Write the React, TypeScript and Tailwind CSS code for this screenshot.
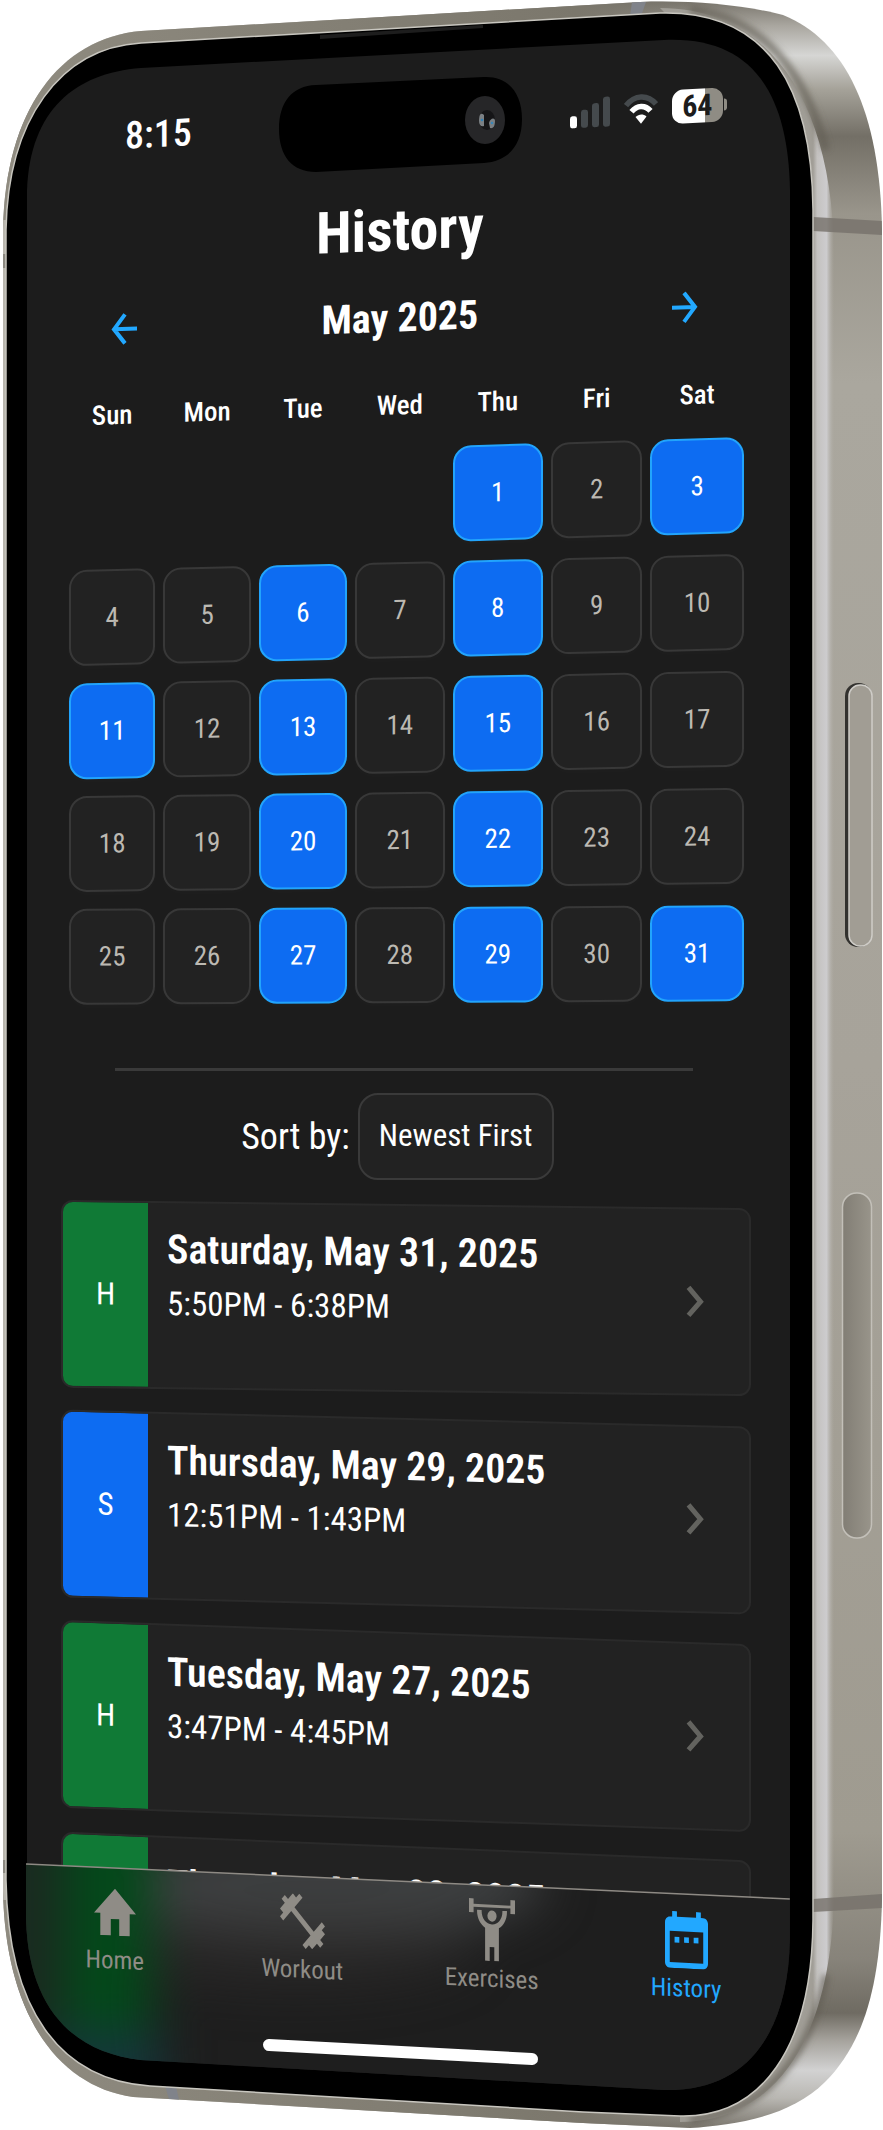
import React from "react";

type Day = { date: number; done?: boolean } | null;

const WEEKDAYS = ["Sun", "Mon", "Tue", "Wed", "Thu", "Fri", "Sat"];
const TRAINED = [1, 3, 6, 8, 11, 13, 15, 20, 22, 27, 29, 31];

const WEEKS: Day[][] = [0, 1, 2, 3, 4].map((week) =>
  WEEKDAYS.map((_, i) => {
    const date = week * 7 + i - 3;
    return date < 1 ? null : { date, done: TRAINED.includes(date) };
  }),
);

const WEEK_TILT = [
  "-skew-y-[1.7deg]",
  "-skew-y-[1.4deg]",
  "-skew-y-[1.1deg]",
  "-skew-y-[0.7deg]",
  "-skew-y-[0.3deg]",
];

const COLUMNS =
  "grid grid-cols-[86fr_87fr_88fr_89fr_90fr_91fr_93fr] gap-2 pl-[43px] pr-[46px]";

const SESSIONS = [
  { tag: "H", color: "bg-[#107a36]", title: "Saturday, May 31, 2025", time: "5:50PM - 6:38PM", tilt: "skew-y-[0.7deg]" },
  { tag: "S", color: "bg-[#0d6cf2]", title: "Thursday, May 29, 2025", time: "12:51PM - 1:43PM", tilt: "skew-y-[1.4deg]" },
  { tag: "H", color: "bg-[#107a36]", title: "Tuesday, May 27, 2025", time: "3:47PM - 4:45PM", tilt: "skew-y-[2deg]" },
  { tag: "H", color: "bg-[#107a36]", title: "Thursday, May 22, 2025", time: "4:02PM - 4:58PM", tilt: "skew-y-[2.4deg]" },
];

function PhoneBody() {
  return (
    <svg
      className="absolute inset-0 h-full w-full"
      viewBox="0 0 883 2130"
      preserveAspectRatio="none"
      aria-hidden="true"
    >
      <defs>
        <linearGradient id="metal" x1="0" y1="0" x2="0" y2="1">
          <stop offset="0" stopColor="#77736a" />
          <stop offset="0.012" stopColor="#a9a69f" />
          <stop offset="0.026" stopColor="#d6d6d4" />
          <stop offset="0.042" stopColor="#a5a299" />
          <stop offset="0.064" stopColor="#736f66" />
          <stop offset="0.1" stopColor="#99958b" />
          <stop offset="0.18" stopColor="#aaa79e" />
          <stop offset="0.5" stopColor="#a7a39a" />
          <stop offset="0.86" stopColor="#9f9b90" />
          <stop offset="0.92" stopColor="#87837a" />
          <stop offset="0.945" stopColor="#6f6b62" />
          <stop offset="0.958" stopColor="#a6a39d" />
          <stop offset="0.972" stopColor="#d2d2d2" />
          <stop offset="0.985" stopColor="#b9b7b2" />
          <stop offset="1" stopColor="#77736a" />
        </linearGradient>
        <linearGradient id="edge" x1="813" x2="834" y1="0" y2="0" gradientUnits="userSpaceOnUse">
          <stop offset="0" stopColor="#a19e97" />
          <stop offset="0.2" stopColor="#c4c2c0" />
          <stop offset="0.65" stopColor="#cdccce" />
          <stop offset="1" stopColor="#b3b0a9" stopOpacity="0" />
        </linearGradient>
        <linearGradient id="rim" x1="0" x2="1" y1="0" y2="0">
          <stop offset="0" stopColor="#8f8b80" />
          <stop offset="0.8" stopColor="#7b776c" />
          <stop offset="1" stopColor="#6f6b62" stopOpacity="0" />
        </linearGradient>
        <linearGradient id="rail" x1="842" x2="872" y1="0" y2="0" gradientUnits="userSpaceOnUse">
          <stop offset="0" stopColor="#817d74" />
          <stop offset="1" stopColor="#99958b" />
        </linearGradient>
        <filter id="shade" x="-20%" y="-20%" width="140%" height="140%">
          <feGaussianBlur stdDeviation="3" />
        </filter>
        <clipPath id="body">
          <path d="M3 230C5 110 60 38 141 31L640 2C690 0 745 5 783 15C845 40 880 110 882 230V1900C880 1990 862 2045 825 2082C790 2117 735 2125 690 2128L583 2123L133 2097C55 2086 5 2010 3 1890Z" />
        </clipPath>
      </defs>
      <g clipPath="url(#body)">
        <rect width="883" height="2130" fill="url(#metal)" />
        <path d="M0 240C5 105 60 34 141 28L647 0H720L690 24L141 50L40 140L10 250Z" fill="url(#rim)" />
        <path d="M0 1880L10 1880C30 2000 60 2070 150 2084L690 2112L730 2130H0Z" fill="url(#rim)" />
        <path d="M0 220H7V1900H0Z" fill="#b9b6ae" />
        <path d="M660 8C775 8 832 110 834 250V1900C830 2040 775 2122 680 2122L680 2108L800 1950V150Z" fill="url(#edge)" />
        <path
          d="M690 10C760 16 805 70 826 150M690 2120C770 2112 812 2050 826 1975"
          fill="none"
          stroke="#5f5b52"
          strokeOpacity="0.7"
          strokeWidth="7"
          filter="url(#shade)"
        />
        <path d="M813 217L883 221V235L813 231Z" fill="#75716a" fillOpacity="0.8" />
        <path d="M813 1899L883 1894V1908L813 1912Z" fill="#75716a" fillOpacity="0.8" />
        <path d="M632 2H646L641 16H630Z" fill="#80838a" />
        <path d="M165 2086H176L179 2100L169 2099Z" fill="#80838a" />
        <path d="M2 254H6V268H2ZM2 1860H6V1873H2Z" fill="#8c8981" />
      </g>
      <rect x="845" y="683" width="27" height="264" rx="13" fill="#33322f" />
      <rect x="849" y="685" width="23" height="261" rx="11" fill="#a19d94" stroke="#cfcdc8" strokeWidth="1.5" />
      <rect x="842.5" y="1193" width="29" height="345" rx="14" fill="url(#rail)" stroke="#c3c0b9" strokeWidth="1.5" />
      <path
        d="M6 230C8 120 60 48 141 43L660 13C770 10 812 90 813 210V1920C812 2050 760 2118 680 2116L583 2112L150 2086C60 2080 8 2010 6 1880Z"
        fill="#000"
        stroke="#c8c6bf"
        strokeWidth="1.5"
      />
      <path d="M320 35L483 25V28L320 39Z" fill="#1d1d1d" />
      <path
        d="M27 190C30 110 75 73 141 68L664 40C750 36 788 90 790 190V1940C788 2030 750 2092 664 2090L141 2060C75 2052 30 2010 27 1920Z"
        fill="#1c1c1c"
      />
      <path d="M316 85L484 77C508 76 522 93 522 119C522 146 508 161 484 163L316 172C292 172 279 156 279 129C279 102 292 86 316 85Z" fill="#000" />
      <ellipse cx="485" cy="120" rx="20" ry="24" fill="#262628" />
      <ellipse cx="487" cy="120" rx="8" ry="10" fill="#151517" />
      <path d="M479 121C479 114 481 112 484 115V126C481 127 479 125 479 121Z" fill="#7b8084" />
      <path d="M489 123C490 118 495 117 495 121C495 126 493 129 490 128Z" fill="#7b8084" />
      <circle cx="482" cy="120" r="1.300" fill="#2f7fb5" />
      <circle cx="492" cy="123" r="1.300" fill="#3a86b8" />
    </svg>
  );
}

function StatusBar() {
  return (
    <div className="flex h-10 -skew-y-3 items-center justify-between pl-[99px] pr-[63px] text-white">
      <span className="text-[38px] font-medium leading-10">8:15</span>
      <div className="flex items-center gap-[14px]">
        <svg width="41" height="34" viewBox="0 0 41 34" aria-label="Signal">
          <rect x="1" y="21" width="7" height="12" rx="2.5" fill="#fff" />
          <rect x="12" y="15" width="7" height="18" rx="2.5" fill="#454a4d" />
          <rect x="23" y="9" width="7" height="24" rx="2.5" fill="#454a4d" />
          <rect x="34" y="3" width="7" height="30" rx="2.5" fill="#454a4d" />
        </svg>
        <svg width="34" height="31" viewBox="0 0 34 31" fill="none" aria-label="Wi-Fi">
          <path d="M2 11C10.500 0.500 23.500 0.500 32 11" stroke="#454a4d" strokeWidth="5.500" />
          <path d="M7.500 17.500C13 11 21 11 26.500 17.500" stroke="#fff" strokeWidth="5.500" />
          <path d="M11.500 23C15 20 19 20 22.500 23L17 30Z" fill="#fff" />
        </svg>
        <span className="flex items-center gap-px">
          <span className="flex h-[34px] w-[51px] items-center justify-center rounded-[11px] bg-[linear-gradient(90deg,#fff_65%,#8f8c84_65%)] text-[30px] font-bold leading-none text-[#1c1c1c]">
            64
          </span>
          <span className="h-3 w-[3px] rounded-r-full bg-[#8f8c84]" />
        </span>
      </div>
    </div>
  );
}

function Arrow({ back = false }: { back?: boolean }) {
  return (
    <svg width="28" height="32" viewBox="0 0 28 32" fill="none" stroke="#22a8ff" strokeWidth="4" aria-hidden="true">
      {back ? <path d="M27 16H4M15 1.500L4 16l11 14.500" /> : <path d="M2 16h23M14 1.500L25 16L14 30.500" />}
    </svg>
  );
}

function Calendar() {
  return (
    <section aria-label="May 2025">
      <div className={`${COLUMNS} mt-[47px] -skew-y-2`}>
        {WEEKDAYS.map((d) => (
          <div key={d} className="text-center text-[27px] font-medium leading-8">
            {d}
          </div>
        ))}
      </div>
      <div className="mt-[26px] flex flex-col gap-[19px]">
        {WEEKS.map((week, w) => (
          <div key={w} className={`${COLUMNS} ${WEEK_TILT[w]}`}>
            {week.map((day, i) =>
              day ? (
                <button
                  key={i}
                  type="button"
                  className={`h-24 rounded-[18px] border-2 text-[27px] shadow-[0_2px_8px_rgba(255,255,255,0.02)] ${
                    day.done
                      ? "border-[#22a4fc] bg-[#0d6cf2] text-white"
                      : "border-[#383838] bg-[#222222] text-[#bcb9b2]"
                  }`}
                >
                  {day.date}
                </button>
              ) : (
                <span key={i} className="h-24" />
              ),
            )}
          </div>
        ))}
      </div>
    </section>
  );
}

function Sessions() {
  return (
    <ul className="mt-6 flex flex-col gap-[26px] pl-[35px] pr-[39px]">
      {SESSIONS.map((s) => (
        <li key={s.title} className={s.tilt}>
          <a
            href="#session"
            className="flex h-[188px] overflow-hidden rounded-xl border-2 border-[#2a2a2a] bg-[#222222]"
          >
            <span className={`flex w-[85px] shrink-0 items-center justify-center text-[31px] ${s.color}`}>
              {s.tag}
            </span>
            <span className="flex flex-1 flex-col pl-[19px] pt-5">
              <span className="text-[40px] font-semibold leading-[54px]">{s.title}</span>
              <span className="text-[33px] leading-[54px]">{s.time}</span>
            </span>
            <span className="flex items-center pr-[45px]">
              <svg width="18" height="32" viewBox="0 0 18 32" fill="none" stroke="#63635f" strokeWidth="5" aria-hidden="true">
                <path d="M2.500 2L14.500 16L2.500 30" />
              </svg>
            </span>
          </a>
        </li>
      ))}
    </ul>
  );
}

const TABS = [
  {
    label: "Home",
    box: "2 3 20 17",
    size: "h-[47px] w-[42px]",
    d: "M10 20v-6h4v6h5v-8h3L12 3 2 12h3v8z",
  },
  {
    label: "Workout",
    box: "2 2 20 20",
    size: "h-[55px] w-[45px]",
    d: "M20.57 14.86L22 13.43 20.57 12 17 15.57 8.43 7 12 3.43 10.57 2 9.14 3.43 7.71 2 5.57 4.14 4.14 2.71 2.71 4.14l1.43 1.43L2 7.71l1.43 1.43L2 10.57 3.43 12 7 8.43 15.57 17 12 20.57 13.43 22l1.43-1.43L16.29 22l2.14-2.14 1.43 1.43 1.43-1.43-1.43-1.43L22 16.290z",
  },
  {
    label: "Exercises",
    box: "2 1 20 22",
    size: "h-[62px] w-[46px]",
    d: "M12 5a2 2 0 1 1 0 4a2 2 0 0 1 0-4M22 1v5h-2V4H4v2H2V1h2v2h16V1zM15 11.260V23h-2v-5h-2v5H9V11.260C6.930 10.170 5.500 8 5.500 5.500V5h2v.500C7.500 8 9.500 10 12 10s4.500-2 4.500-4.500V5h2v.500c0 2.500-1.430 4.670-3.500 5.760z",
  },
  {
    label: "History",
    box: "3 2 18 20",
    size: "h-[57px] w-[43px]",
    active: true,
    d: "M9 11H7v2h2v-2zm4 0h-2v2h2v-2zm4 0h-2v2h2v-2zm2-7h-1V2h-2v2H8V2H6v2H5c-1.110 0-1.990.900-1.990 2L3 20c0 1.100.890 2 2 2h14c1.100 0 2-.900 2-2V6c0-1.100-.900-2-2-2zm0 16H5V9h14v11z",
  },
];

function TabBar() {
  return (
    <nav className="relative -mt-[174px] h-[232px] pt-[35px]">
      <svg
        className="absolute inset-0 h-full w-full"
        viewBox="0 0 763 232"
        preserveAspectRatio="none"
        aria-hidden="true"
      >
        <defs>
          <clipPath id="bar">
            <path d="M0 4L763 39V80C761 170 723 232 637 230L114 200C48 192 3 150 0 60Z" />
          </clipPath>
          <filter
            id="soft"
            filterUnits="userSpaceOnUse"
            x="-200"
            y="-200"
            width="1160"
            height="640"
            colorInterpolationFilters="sRGB"
          >
            <feGaussianBlur stdDeviation="24" />
          </filter>
        </defs>
        <g clipPath="url(#bar)">
          <rect width="763" height="232" fill="#1e1e1e" />
          <g filter="url(#soft)">
            <ellipse cx="300" cy="24" rx="220" ry="56" fill="#454749" fillOpacity="0.8" />
            <ellipse cx="270" cy="90" rx="180" ry="40" fill="#343331" fillOpacity="0.4" />
            <rect x="-60" y="-40" width="110" height="240" fill="#1a2a20" />
            <rect x="40" y="-60" width="86" height="232" fill="#03491a" />
            <rect x="10" y="172" width="125" height="90" fill="#15363c" />
          </g>
        </g>
        <path d="M0 4L763 39" stroke="#8e8a84" strokeWidth="1.5" />
      </svg>
      <ul className="relative grid skew-y-[2.8deg] grid-cols-[178fr_198fr_182fr_208fr]">
        {TABS.map((t) => (
          <li key={t.label}>
            <a
              href={`#${t.label.toLowerCase()}`}
              className={`flex flex-col items-center gap-1.5 ${t.active ? "text-[#22a8ff]" : "text-[#8f8c86]"}`}
            >
              <span className="flex h-[62px] items-center">
                <svg className={t.size} viewBox={t.box} preserveAspectRatio="none" fill="currentColor" aria-hidden="true">
                  <path d={t.d} />
                </svg>
              </span>
              <span className="text-[25px] leading-6">{t.label}</span>
            </a>
          </li>
        ))}
      </ul>
      <div className="relative mx-auto mt-[59px] h-3 w-[36%] -translate-x-2 skew-y-3 rounded-full bg-white" />
    </nav>
  );
}

export default function App() {
  return (
    <div className="relative overflow-hidden bg-white pb-[38px] pl-[3%] pr-[10.5%] pt-[101px] font-['Roboto_Condensed','Roboto',sans-serif] text-white">
      <PhoneBody />
      <main className="relative">
        <StatusBar />
        <h1 className="mt-[57px] -translate-x-2 -skew-y-[2.6deg] text-center text-[58px] font-bold leading-[64px]">
          History
        </h1>
        <div className="mt-8 flex h-12 -skew-y-[2.2deg] items-center justify-between pl-[84px] pr-[92px]">
          <button type="button" aria-label="Previous month">
            <Arrow back />
          </button>
          <h2 className="pr-2 text-[40px] font-bold leading-[48px]">May 2025</h2>
          <button type="button" aria-label="Next month">
            <Arrow />
          </button>
        </div>
        <Calendar />
        <hr className="ml-[89px] mr-[97px] mt-[65px] h-[3px] border-0 bg-[#3a3a3a]" />
        <div className="mt-[22px] flex h-[87px] items-center justify-center gap-2 pr-[22px]">
          <label htmlFor="sort" className="text-[36px]">
            Sort by:
          </label>
          <select
            id="sort"
            defaultValue="newest"
            className="h-[87px] w-[196px] appearance-none rounded-[20px] border-2 border-[#3a3a3a] bg-[#222222] text-center text-[31px] text-white"
          >
            <option value="newest">Newest First</option>
            <option value="oldest">Oldest First</option>
          </select>
        </div>
        <Sessions />
        <TabBar />
      </main>
    </div>
  );
}
